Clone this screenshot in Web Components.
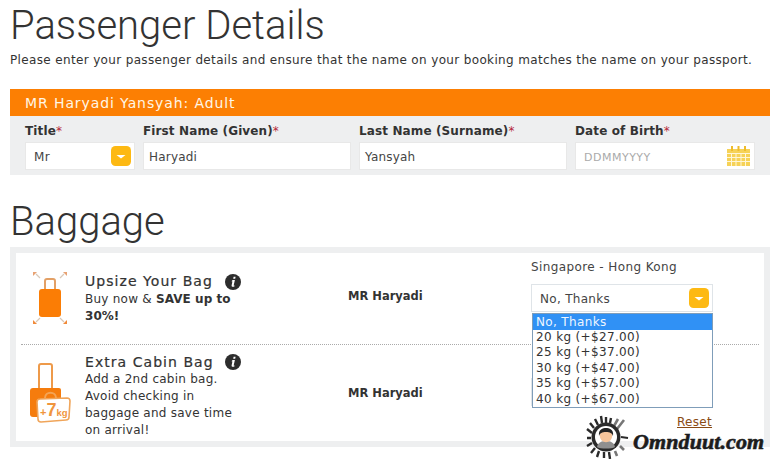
<!DOCTYPE html>
<html lang="en"><head><meta charset="utf-8"><title>Passenger Details</title>
<style>
html,body{margin:0;background:#fff}
body{font:12px/15px "DejaVu Sans",Verdana,sans-serif;color:#333;width:782px;height:459px;overflow:hidden;position:relative}
</style></head><body>
<app-page></app-page>
<script>
const CARET=`<svg width="20" height="20" viewBox="0 0 20 20" aria-hidden="true"><rect width="20" height="20" rx="4.5" fill="#fdb913"/><path d="M5.5 9h9L10 12.6z" fill="#fff"/></svg>`;
function def(name,css,html){
  customElements.define(name,class extends HTMLElement{
    constructor(){super();this.attachShadow({mode:'open'}).innerHTML=`<style>${css}</style>${html}`}
  });
}
def('page-heading',`:host{display:block;font:300 40px/48px Roboto,sans-serif;color:#333}`,`<slot></slot>`);

def('field-label',`:host{display:block;font:bold 12px/16px "DejaVu Sans",sans-serif;color:#333;letter-spacing:.12px;height:19px}
b{color:#b5273a;font-weight:normal}`,`<slot></slot><b>*</b>`);

def('text-box',`:host{display:flex;align-items:center;box-sizing:border-box;height:28px;background:#fff;border:1px solid #e8e8e8;padding:0 3px 0 5px;font:12px/15px "DejaVu Sans",sans-serif;letter-spacing:.2px;color:#444;justify-content:space-between}
.t{padding-top:2px;display:flex}`,`<span class="t"><slot></slot></span><slot name="end"></slot>`);

def('select-box',`:host{display:flex;align-items:center;justify-content:space-between;box-sizing:border-box;height:28px;background:#fff;border:1px solid var(--edge,#e8e8e8);padding:0 3px 0 8px;font:12px/15px "DejaVu Sans",sans-serif;letter-spacing:.3px;color:#444}
span{display:flex}.t{padding-top:2px}`,`<span class="t"><slot></slot></span><span>${CARET}</span>`);

def('passenger-form',`:host{display:block;margin-top:21px}
.bar{background:#fc7f03;color:#fff6e6;font:14px/28px "DejaVu Sans",sans-serif;height:27px;padding-left:15px;letter-spacing:.9px}
.body{background:#eeeff0;height:59px;box-sizing:border-box;padding:7px 15px 5px;display:grid;grid-template-columns:110px 208px 208px 180px;column-gap:8px}`,
`<div class="bar"><slot name="title"></slot></div><div class="body"><slot></slot></div>`);

def('form-field',`:host{display:block}`,`<slot name="label"></slot><slot></slot>`);

def('info-dot',`:host{display:block;width:16px;height:16px}`,
`<svg width="16" height="16" viewBox="0 0 16 16" aria-hidden="true"><circle cx="8" cy="8" r="8" fill="#2d2d2d"/><path d="M8.6 2.8h2l-.4 1.9h-2zM7.6 6h2.3l-1.2 5.2c-.1.4.2.5.9.3l-.2.9c-1.7.6-3 .4-2.8-1l.8-3.9-.9-.2z" fill="#fff"/></svg>`);

def('bag-row',`:host{display:grid;grid-template-columns:55px 263px 183px 182px;box-sizing:border-box;padding-left:14px}
.icon{display:flex;align-items:flex-start}
.title{display:flex;align-items:center;font:14px/var(--tl,18px) "DejaVu Sans",sans-serif;color:#333;letter-spacing:1.05px;-webkit-text-stroke:.2px #333}
.name{width:140px}
.desc{font:12px/17px "DejaVu Sans",sans-serif;color:#333;width:156px;letter-spacing:.25px}
.who{font:bold 11.5px/15px "DejaVu Sans",sans-serif;color:#333}`,
`<div class="icon"><slot name="icon"></slot></div>
<div><div class="title"><span class="name"><slot name="title"></slot></span><info-dot></info-dot></div><div class="desc"><slot name="desc"></slot></div></div>
<div class="who"><slot name="who"></slot></div>
<div><slot name="sel"></slot></div>`);

def('drop-list',`:host{display:block;position:absolute;left:532px;top:313px;width:181px;height:95px;box-sizing:border-box;background:#fff;border:1px solid #7f9db9;font:12px/15.45px "DejaVu Sans",sans-serif;color:#333;letter-spacing:.35px}
::slotted(div){padding-left:3px;height:15.45px}
::slotted(.on){background:#3091f5;color:#eef6ff;height:16px;line-height:16px}`,`<slot></slot>`);

def('brand-mark',`:host{position:absolute;left:585px;top:415px;display:flex;align-items:flex-start;gap:4px;height:44px}
span{font:italic bold 22px/24px "Liberation Serif",serif;color:#1c1c1c;-webkit-text-stroke:.6px #1c1c1c;margin-top:15px;letter-spacing:.1px}
svg{display:block}`,
`<svg width="44" height="44" viewBox="0 0 44 44" aria-hidden="true">
<g stroke="#2a2a2a" stroke-linecap="butt" fill="none">
<path stroke-width="2.4" d="M13 10 10 4M17 8l-1-7M21 8V2M25 8l1-5M9 13 5 8M7 18l-5-4M6 23H2M7 28l-5 3M10 33l-4 5M14 36l-2 6M19 37v6M24 37l1 7"/>
<path stroke="#777" stroke-width="2.6" d="M29 11l4-7M32 14l7-9M35 31l4 4M30 36l2 5"/>
<path stroke-width="2" d="M36 22l7 1"/></g>
<circle cx="21" cy="22" r="14.5" fill="#2a2a2a"/><circle cx="21" cy="22" r="11" fill="#fff"/>
<path d="M12 32c1-5 5-6 9-6s8 1 9 6c-3 2-15 2-18 0z" fill="#8f8f8f"/>
<circle cx="21" cy="21" r="6.2" fill="#f6c49a"/><path d="M14 21c-1-7 4-8 7-8s8 1 7 8c-1-3-3-4-7-4s-6 1-7 4z" fill="#222"/>
</svg><span><slot></slot></span>`);

def('baggage-panel',`:host{display:block;margin-top:1px;box-sizing:border-box;height:200px;border:6px solid #eeeff0;background:#fff}
.r1{height:91px;box-sizing:border-box}
hr{border:0;border-top:1px dotted #aaa;margin:0 5px;height:0}`,
`<div class="r1"><slot name="a"></slot></div><hr><slot name="b"></slot>`);

def('app-page',`:host{display:block;padding:0 12px 0 10px}
p{margin:0;font:12px/16px "DejaVu Sans",sans-serif;color:#333}
.head{padding-top:2px}
.p2{margin-top:23px}
.intro{margin-top:2px;letter-spacing:.35px}
.route{display:block;font:12px/15px "DejaVu Sans",sans-serif;color:#444;letter-spacing:.4px;margin-bottom:9px}
.t{display:block}
.reset{position:absolute;left:677px;top:415px;font:12px/15px "DejaVu Sans",sans-serif;color:#8a4b14;letter-spacing:.3px}
`,`
<div class="head"><page-heading>Passenger Details</page-heading></div>
<p class="intro">Please enter your passenger details and ensure that the name on your booking matches the name on your passport.</p>
<passenger-form>
 <span slot="title">MR Haryadi Yansyah: Adult</span>
 <form-field><field-label slot="label">Title</field-label><select-box>Mr</select-box></form-field>
 <form-field><field-label slot="label">First Name (Given)</field-label><text-box>Haryadi</text-box></form-field>
 <form-field><field-label slot="label">Last Name (Surname)</field-label><text-box>Yansyah</text-box></form-field>
 <form-field><field-label slot="label">Date of Birth</field-label><text-box><span style="color:#aaa;font-size:11px;margin-left:3px;letter-spacing:.5px">DDMMYYYY</span>
  <svg slot="end" width="25" height="20" viewBox="0 0 25 20" aria-hidden="true"><path d="M1 3h23v17H1z" fill="#f6d257"/><path d="M1 7.5h23M1 11.5h23M1 15.5h23M5.5 7v13M10 7v13M15 7v13M19.5 7v13" stroke="#fff6d8" stroke-width="1"/><path d="M6 0v5M12.5 0v5M19 0v5" stroke="#eebc2d" stroke-width="2"/></svg></text-box></form-field>
</passenger-form>
<div class="p2"><page-heading>Baggage</page-heading></div>
<baggage-panel>
 <bag-row slot="a" style="padding-top:19px;--tl:19px">
  <svg slot="icon" width="40" height="56" viewBox="0 0 40 56" aria-hidden="true" style="margin-top:-1px"><path d="M15 20V10a2 2 0 0 1 2-2h6a2 2 0 0 1 2 2v10" fill="none" stroke="#e3a066" stroke-width="2"/><rect x="9" y="18" width="22" height="28" rx="3" fill="#fb7d05"/>
   <path d="M6 3l4 4M34 3l-4 4M6 51l4-4M34 51l-4-4" stroke="#d8c8b8" stroke-width="1.2"/><path d="M3 1h4L3 5zM37 1h-4l4 4z" fill="#e8a273"/><path d="M3 53h4l-4-4zM37 53h-4l4-4z" fill="#f08a3a"/></svg>
  <span slot="title">Upsize Your Bag</span>
  <span slot="desc">Buy now &amp; <b style="letter-spacing:.05px">SAVE up to</b> <b style="letter-spacing:.05px">30%!</b></span>
  <span slot="who" style="display:block;padding-top:17px">MR Haryadi</span>
  <span slot="sel" class="t" style="margin-top:-12px"><span class="route">Singapore - Hong Kong</span><select-box style="--edge:#dfe4e8">No, Thanks</select-box></span>
 </bag-row>
 <bag-row slot="b" style="padding-top:8px;--tl:18px">
  <svg slot="icon" width="41" height="60" viewBox="0 0 41 60" aria-hidden="true" style="margin-top:10px"><path d="M9 26V3a2 2 0 0 1 2-2h9a2 2 0 0 1 2 2v23" fill="none" stroke="#ee9a4a" stroke-width="2"/><path d="M3 25h26a2 2 0 0 1 2 2v27H3a3 3 0 0 1-3-3V28a3 3 0 0 1 3-3z" fill="#f57c0d"/>
   <path d="M15 35c0-7 11-7 11 0" fill="none" stroke="#f3a455" stroke-width="2"/><path d="M10 36l27-1a3 3 0 0 1 3 3l-1 16a3 3 0 0 1-3 3l-25 2a3 3 0 0 1-3-3l-1-17a3 3 0 0 1 3-3z" fill="#fff" stroke="#f0a55a" stroke-width="1.6"/>
   <text x="10" y="53" font-family="Liberation Sans" font-weight="700" font-size="11" fill="#f0953d">+<tspan font-size="18">7</tspan><tspan font-size="9.5">kg</tspan></text></svg>
  <span slot="title">Extra Cabin Bag</span>
  <span slot="desc">Add a 2nd cabin bag. Avoid checking in baggage and save time on arrival!</span>
  <span slot="who" style="display:block;padding-top:33px">MR Haryadi</span>
  <span slot="sel" class="t" style="padding-top:25px"><select-box style="--edge:#dfe4e8"></select-box></span>
 </bag-row>
</baggage-panel>
<a class="reset" href="#">Reset</a>
<drop-list><div class="on">No, Thanks</div><div>20 kg (+$27.00)</div><div>25 kg (+$37.00)</div><div>30 kg (+$47.00)</div><div>35 kg (+$57.00)</div><div>40 kg (+$67.00)</div></drop-list>
<brand-mark>Omnduut.com</brand-mark>
`);
</script>
</body></html>
